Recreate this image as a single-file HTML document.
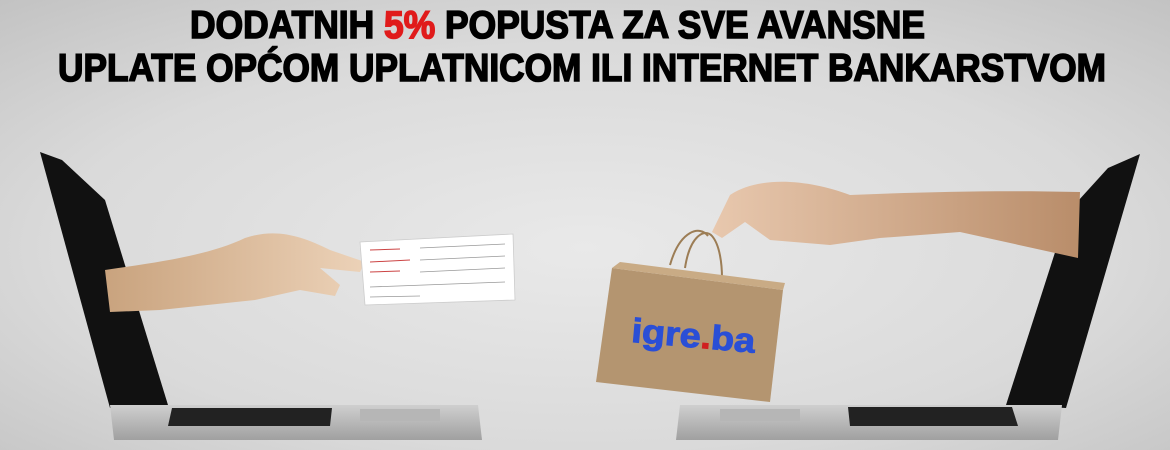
<!DOCTYPE html>
<html><head><meta charset="utf-8"><style>
html,body{margin:0;padding:0;width:1170px;height:450px;overflow:hidden}
svg{display:block}
</style></head><body>
<svg width="1170" height="450" viewBox="0 0 1170 450" xmlns="http://www.w3.org/2000/svg">
<defs>
<radialGradient id="bg" cx="0.5" cy="0.55" r="0.75">
<stop offset="0" stop-color="#e9e9e9"/><stop offset="0.6" stop-color="#dadada"/><stop offset="1" stop-color="#c2c2c2"/>
</radialGradient>
<linearGradient id="base" x1="0" y1="0" x2="0" y2="1"><stop offset="0" stop-color="#cfcfcf"/><stop offset="1" stop-color="#a0a0a0"/></linearGradient>
<linearGradient id="skin" x1="0" y1="0" x2="1" y2="0"><stop offset="0" stop-color="#c9a37e"/><stop offset="1" stop-color="#ecd2b8"/></linearGradient>
<linearGradient id="skin2" x1="1" y1="0" x2="0" y2="0"><stop offset="0" stop-color="#b98d6a"/><stop offset="1" stop-color="#e8c8ae"/></linearGradient>
</defs>
<rect width="1170" height="450" fill="url(#bg)"/>
<g font-family="'Liberation Sans',sans-serif" font-weight="bold" font-size="39" fill="#000" stroke="#000" stroke-width="1.6">
<text x="190" y="38" textLength="735" lengthAdjust="spacingAndGlyphs">DODATNIH <tspan fill="#e01b1b" stroke="#e01b1b">5%</tspan> POPUSTA ZA SVE AVANSNE</text>
<text x="58" y="81" textLength="1048" lengthAdjust="spacingAndGlyphs">UPLATE OPĆOM UPLATNICOM ILI INTERNET BANKARSTVOM</text>
</g>
<!-- left laptop -->
<polygon points="40,152 62,160 105,200 168,405 110,408" fill="#111"/>
<polygon points="110,405 478,405 482,440 114,440" fill="url(#base)"/>
<polygon points="172,408 332,408 330,426 168,426" fill="#222"/>
<rect x="360" y="409" width="80" height="12" fill="#b6b6b6"/>
<!-- left hand -->
<path d="M105,270 C160,262 210,255 245,238 C275,228 300,235 330,250 L365,262 L360,272 L320,268 L340,285 L335,296 L300,290 L255,300 L160,310 L110,312 Z" fill="url(#skin)"/>
<polygon points="360,242 513,234 515,300 365,305" fill="#fff" stroke="#ccc" stroke-width="0.8"/>
<g stroke="#c44" stroke-width="1"><line x1="370" y1="250" x2="400" y2="249"/><line x1="370" y1="262" x2="410" y2="260"/><line x1="370" y1="272" x2="400" y2="271"/></g>
<g stroke="#999" stroke-width="0.8"><line x1="420" y1="248" x2="505" y2="244"/><line x1="420" y1="260" x2="505" y2="256"/><line x1="420" y1="272" x2="505" y2="268"/><line x1="370" y1="287" x2="505" y2="282"/><line x1="370" y1="297" x2="420" y2="296"/></g>
<!-- right laptop -->
<polygon points="1140,154 1108,168 1068,212 1006,405 1066,408" fill="#111"/>
<polygon points="680,405 1062,405 1058,440 676,440" fill="url(#base)"/>
<polygon points="848,407 1012,407 1018,426 850,426" fill="#222"/>
<rect x="720" y="409" width="80" height="12" fill="#b6b6b6"/>
<!-- right arm -->
<path d="M1080,192 C1000,190 920,192 850,195 C810,180 760,175 730,195 L712,232 L722,238 L745,222 L770,240 L830,245 L880,238 L960,232 L1078,258 Z" fill="url(#skin2)"/>
<!-- bag -->
<path d="M685,268 C690,235 705,228 712,236 C720,245 722,265 722,278" fill="none" stroke="#9c7d55" stroke-width="2"/>
<path d="M670,265 C680,230 700,225 708,236" fill="none" stroke="#9c7d55" stroke-width="2"/>
<polygon points="612,268 783,290 770,402 596,382" fill="#b49570"/>
<polygon points="612,268 620,262 785,283 783,290" fill="#c9ab85"/>
<text x="632" y="347" font-family="'Liberation Sans',sans-serif" font-weight="bold" font-size="34" fill="#2a4fd6" stroke="#2a4fd6" stroke-width="1" textLength="124" lengthAdjust="spacingAndGlyphs" transform="rotate(5 690 330)">igre<tspan fill="#d02020" stroke="#d02020">.</tspan>ba</text>
</svg>
</body></html>
